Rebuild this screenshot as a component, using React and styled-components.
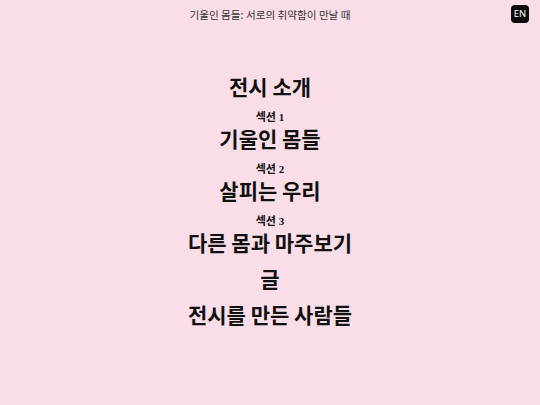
import React from 'react';
import styled, { createGlobalStyle } from 'styled-components';

const GlobalStyle = createGlobalStyle`
  html, body {
    margin: 0;
    padding: 0;
    background: #f9dee8;
  }
  body {
    font-family: "Noto Sans CJK KR", "Noto Sans", sans-serif;
    color: #111;
  }
`;

const Page = styled.div`
  min-height: 405px;
  background: #f9dee8;
`;

const Header = styled.header`
  position: relative;
  height: 28px;
  display: flex;
  align-items: center;
  justify-content: center;
`;

const SiteTitle = styled.div`
  font-size: 10.6px;
  color: #333;
`;

const LangButton = styled.button`
  position: absolute;
  right: 11px;
  top: 5px;
  width: 18px;
  height: 18px;
  padding: 0;
  border: none;
  border-radius: 4px;
  background: #0a0a0a;
  color: #fff;
  font-family: "Noto Sans", sans-serif;
  font-size: 9.5px;
  line-height: 18px;
  cursor: pointer;
`;

const Menu = styled.nav`
  display: flex;
  flex-direction: column;
  align-items: center;
  gap: 6px;
  padding-top: 43px;
`;

const Item = styled.a`
  display: flex;
  flex-direction: column;
  align-items: center;
  color: inherit;
  text-decoration: none;
`;

const Label = styled.span`
  font-family: "Liberation Serif", "Noto Sans CJK KR", serif;
  font-size: 11px;
  font-weight: 700;
  line-height: 12px;
  margin-top: 4px;
`;

const Heading = styled.span`
  font-size: 21px;
  font-weight: 700;
  line-height: 30px;
`;

const items = [
  { title: '전시 소개' },
  { label: '섹션 1', title: '기울인 몸들' },
  { label: '섹션 2', title: '살피는 우리' },
  { label: '섹션 3', title: '다른 몸과 마주보기' },
  { title: '글' },
  { title: '전시를 만든 사람들' },
];

export default function App() {
  return (
    <Page>
      <GlobalStyle />
      <Header>
        <SiteTitle>기울인 몸들: 서로의 취약함이 만날 때</SiteTitle>
        <LangButton type="button">EN</LangButton>
      </Header>
      <Menu>
        {items.map((item) => (
          <Item key={item.title} href="#">
            {item.label && <Label>{item.label}</Label>}
            <Heading>{item.title}</Heading>
          </Item>
        ))}
      </Menu>
    </Page>
  );
}
